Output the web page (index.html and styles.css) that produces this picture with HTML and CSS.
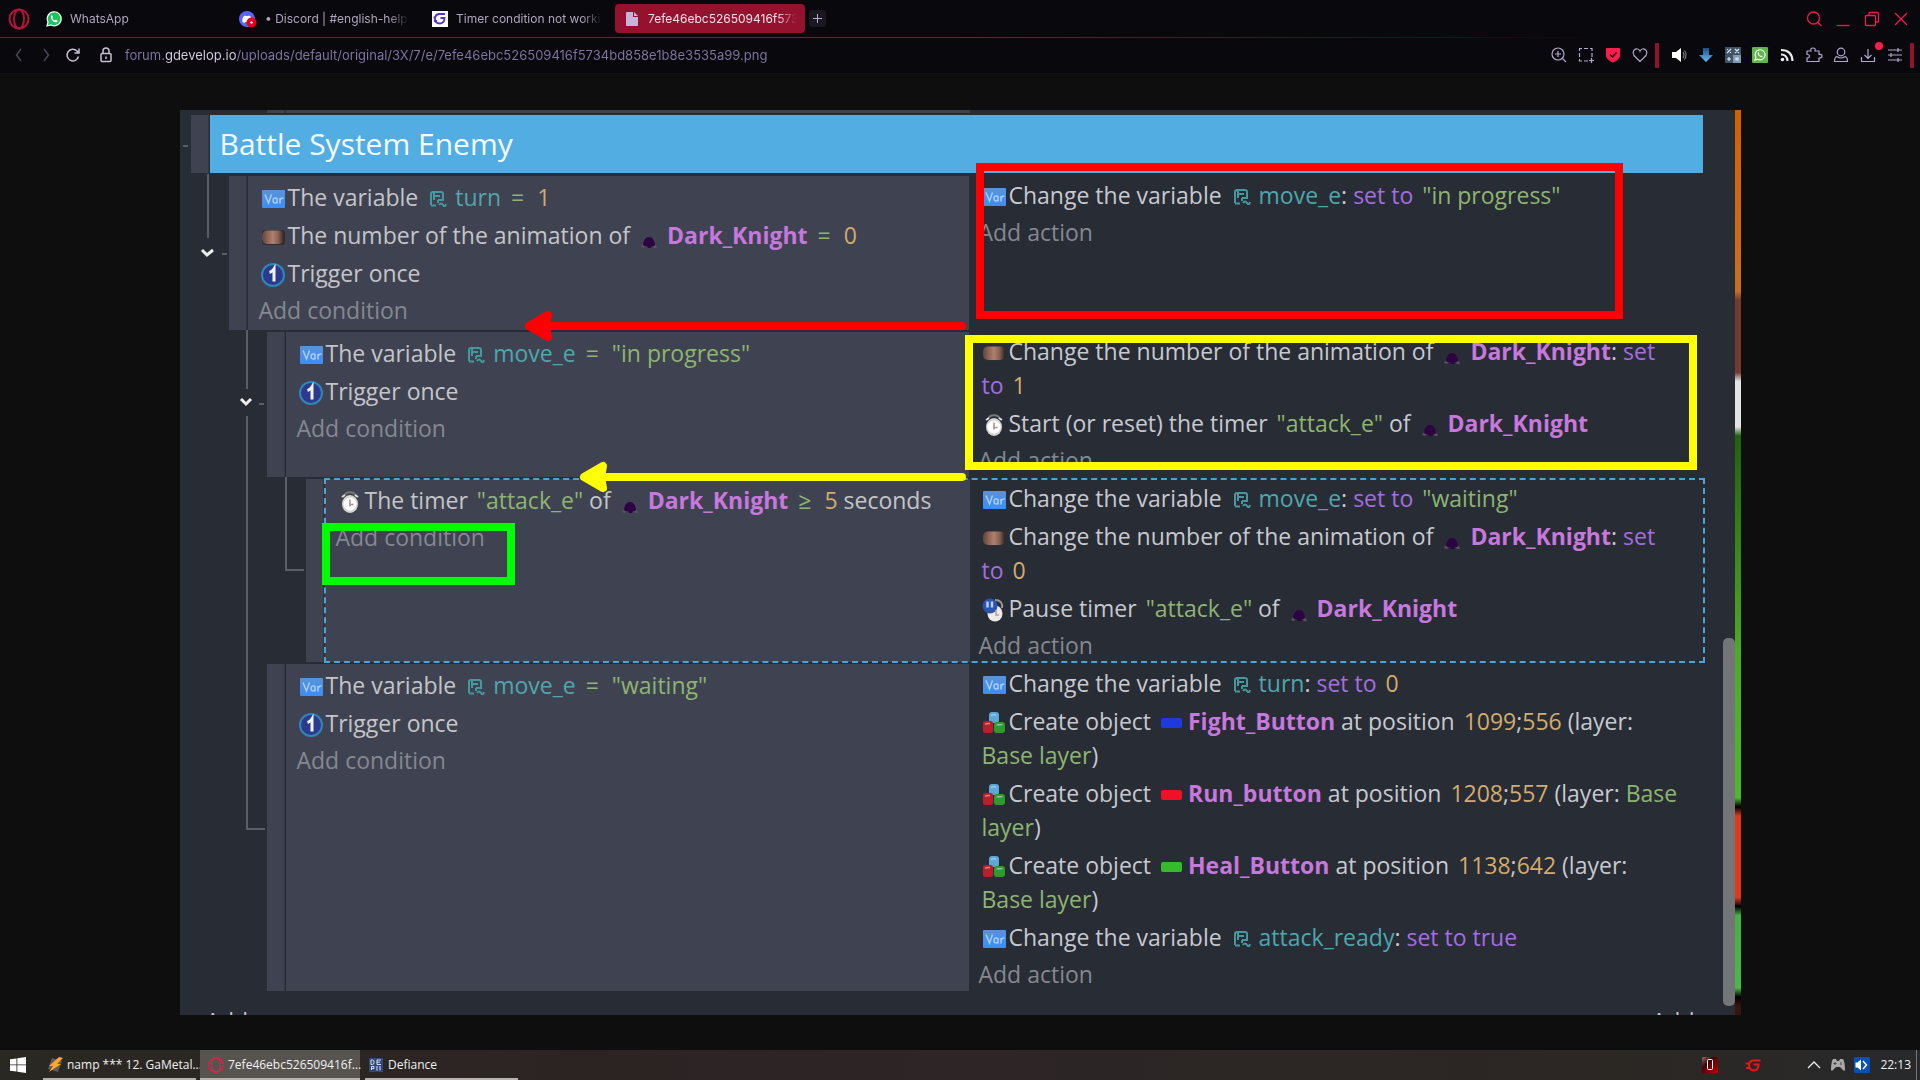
FILE: index.html
```html
<!DOCTYPE html>
<html lang="en">
<head>
<meta charset="utf-8">
<title>7efe46ebc526509416f5734bd858e1b8e3535a99.png</title>
<link rel="stylesheet" href="styles.css">
</head>
<body>
<svg class="defs" aria-hidden="true">
  <defs>
    <linearGradient id="g-var" x1="0" y1="0" x2="0" y2="1"><stop offset="0" stop-color="#5a93d4"/><stop offset="1" stop-color="#3b8dfb"/></linearGradient>
    <linearGradient id="g-hand"><stop offset="0" stop-color="#5a4640"/><stop offset=".25" stop-color="#8d6354"/><stop offset=".5" stop-color="#b08072"/><stop offset=".75" stop-color="#85604f"/><stop offset="1" stop-color="#2a2625"/></linearGradient>
    <linearGradient id="g-down" x1="0" y1="0" x2="0" y2="1"><stop offset="0" stop-color="#1d4f86"/><stop offset="1" stop-color="#5fc0ff"/></linearGradient>
    <linearGradient id="g-zero" x1="0" y1="0" x2="1" y2="1"><stop offset="0" stop-color="#8a7070"/><stop offset=".35" stop-color="#3a0508"/><stop offset="1" stop-color="#c00"/></linearGradient>
  </defs>
  <symbol id="i-var" viewBox="0 0 24 24"><rect x="1" y="3" width="23" height="18" rx="1" fill="url(#g-var)"/><path d="M4 7.500l3.500 8.500 3-8.500M16 11.500c-1-1-4-.8-4 2s3 3 4 1.500m0-4v5.500M19 16.500v-5.500m0 2c.8-1.800 2-2.200 3.500-2" fill="none" stroke="#a9cdf6" stroke-width="1.500"/></symbol>
  <symbol id="i-hand" viewBox="0 0 24 24"><rect x="1" y="5" width="23" height="15" rx="3" fill="#2e2e30"/><rect x="1" y="5.500" width="22" height="13.500" rx="5" fill="url(#g-hand)"/></symbol>
  <symbol id="i-once" viewBox="0 0 24 24"><circle cx="12" cy="12" r="11" fill="#2b3a8c" stroke="#2f86bd" stroke-width="2"/><path d="M8.500 9.500c2-.5 3.500-1.800 4.500-3.500v12.500" fill="none" stroke="#f2f2fa" stroke-width="3"/></symbol>
  <symbol id="i-clock" viewBox="0 0 24 24"><path d="M6 6c2-5 10-5 12 0" fill="none" stroke="#777" stroke-width="2"/><ellipse cx="12" cy="14" rx="8" ry="9" fill="#d8d5d0"/><circle cx="12" cy="14" r="6.500" fill="#fff"/><path d="M4 7l3-2M20 7l-3-2" stroke="#ddd" stroke-width="2"/><path d="M12 9.500v5h3.500M12 14.500v2" fill="none" stroke="#a58f8b" stroke-width="1.500"/></symbol>
  <symbol id="i-pause" viewBox="0 0 24 24"><path d="M13 2c6 0 8 4 7 8" fill="none" stroke="#999" stroke-width="2"/><ellipse cx="13" cy="15.500" rx="7.500" ry="8" fill="#eceae6"/><circle cx="8" cy="8" r="7.500" fill="#2b55ac"/><path d="M5.500 3.500v6M10 3.500v6" stroke="#b5cdf8" stroke-width="2.500"/><path d="M14 12v5h3" fill="none" stroke="#b99" stroke-width="1.500"/></symbol>
  <symbol id="i-create" viewBox="0 0 24 24"><rect x="7" y="1" width="10" height="11" rx="3" fill="#5fa6d8"/><rect x="1" y="10" width="10" height="12" rx="2" fill="#b8202c"/><rect x="12" y="11" width="11" height="11" rx="3" fill="#2f9a2f"/><path d="M9 4.500c1.500-1 4-1 5 0M3 13l5-.5M14.500 14l6-.5" stroke="#fff" stroke-width="1.500" opacity=".45" fill="none"/></symbol>
  <symbol id="i-root" viewBox="0 0 18 16"><path d="M2 14V3q0-2 2-2h8q2 0 2 2v6H9M5 1.500v7.500M5 5h6M2 14.500h5M9 9v3M10 14q2-3 4 0t3-1" fill="none" stroke="currentColor" stroke-width="2"/></symbol>
  <symbol id="i-knight" viewBox="0 0 18 13"><path d="M1 11q2-4 4-3l8 0q3 0 4 4l-3 0-2-2H6l-2 2z" fill="#59505f"/><path d="M3 9Q4 1 9 1t6 8q-2 2-3 1l-1 2H8l-1-2q-2 1-4-1z" fill="#2d0344"/></symbol>
  <symbol id="i-wa" viewBox="0 0 16 16"><path d="M1 15l1-4a7 7 0 1 1 3 3z" fill="#20c05c" stroke="#fff" stroke-width="1.200"/><path d="M5.300 4.500c.8-.7 1.300.5 1.600 1.300L6.300 7c.5 1.200 1.300 2 2.600 2.500l1-.8 1.800 1c-.2 1.800-1.900 1.800-3.200 1.300C6.300 10.200 4 7 5.300 4.500z" fill="#fff"/></symbol>
</svg>

<header class="browser">
  <div class="tabbar">
    <button class="opera" aria-label="Opera menu"><svg width="22" height="22" viewBox="0 0 22 22" fill="none" stroke="#b3143a" stroke-width="2"><ellipse cx="11" cy="11" rx="9.500" ry="9.500"/><ellipse cx="11" cy="11" rx="5" ry="9.500"/></svg></button>
    <nav class="tabs">
      <button class="tab"><svg width="16" height="16"><use href="#i-wa"/></svg><span>WhatsApp</span></button>
      <button class="tab"><svg width="18" height="16" viewBox="0 0 18 16"><circle cx="8" cy="8" r="8" fill="#5865f2"/><path d="M3.500 11C3 8 4 5.500 5 5l1.500-.6.4.6h2.300l.4-.6L11 5c1 .5 2 3 1.600 6l-2 1-.6-1H6.200l-.7 1z" fill="#fff"/><circle cx="12.500" cy="11.500" r="5" fill="#e8001c"/><circle cx="12.500" cy="11.500" r="1.200" fill="#fff"/></svg><span>• Discord | #english-help</span></button>
      <button class="tab"><svg width="16" height="16" viewBox="0 0 16 16"><rect width="16" height="16" fill="#fff"/><path d="M13 3H7Q3 3.500 3 8t5 4.500Q12.500 12 12.500 7H8.500M1.500 6.500h2M2 10h3" fill="none" stroke="#5a2fd0" stroke-width="1.800"/></svg><span>Timer condition not working</span></button>
      <button class="tab active"><svg width="12" height="14" viewBox="0 0 12 14"><path d="M1 0h6v5h5v8q0 1-1 1H1q-1 0-1-1V1q0-1 1-1zM8 0l4 4H8z" fill="#c9b3da"/></svg><span>7efe46ebc526509416f5734bd858e1b8</span></button>
      <button class="newtab" aria-label="New tab"><svg width="11" height="11" viewBox="0 0 11 11" stroke="#b9aed0" stroke-width="1"><path d="M5.500 1v9M1 5.500h9"/></svg></button>
    </nav>
    <div class="winctl">
      <button aria-label="Search tabs"><svg viewBox="0 0 16 16"><circle cx="7.500" cy="7" r="6"/><path d="M12 11.500l3.500 3.500"/></svg></button>
      <button aria-label="Minimize"><svg viewBox="0 0 16 16"><path d="M1.500 14.500h13"/></svg></button>
      <button aria-label="Restore"><svg viewBox="0 0 16 16"><rect x="1.500" y="4.500" width="10" height="10" rx="1"/><path d="M5 4.500V2.500q0-1 1-1h7.500q1 0 1 1V10q0 1-1 1h-2"/></svg></button>
      <button aria-label="Close"><svg viewBox="0 0 16 16"><path d="M2 2l12 12M14 2L2 14"/></svg></button>
    </div>
  </div>
  <div class="addressbar">
    <button class="nav dim" aria-label="Back"><svg viewBox="0 0 16 16"><path d="M10 2L5.500 8l4.500 6"/></svg></button>
    <button class="nav dim" aria-label="Forward"><svg viewBox="0 0 16 16"><path d="M6 2l4.500 6L6 14"/></svg></button>
    <button class="nav" aria-label="Reload"><svg viewBox="0 0 16 16"><path d="M13.500 9.500A5.800 5.800 0 1 1 12 4l1.500 1.500M14 1.500v4.500H9.500"/></svg></button>
    <button class="nav lock" aria-label="Site information"><svg viewBox="0 0 16 16"><rect x="3" y="6.500" width="10" height="8" rx="1"/><path d="M5 6.500V4a3 3 0 0 1 6 0v2.500M8 9.500v2.500"/></svg></button>
    <input class="url" type="text" aria-label="Address" value="forum.gdevelop.io/uploads/default/original/3X/7/e/7efe46ebc526509416f5734bd858e1b8e3535a99.png">
    <div class="tools">
      <button aria-label="Zoom"><svg viewBox="0 0 16 16"><circle cx="7" cy="7" r="6"/><path d="M11.500 11.500L15 15M7 4v6M4 7h6"/></svg></button>
      <button aria-label="Snapshot"><svg viewBox="0 0 16 16"><path d="M1.500 4V1.500H4M6 1.500h4M12 1.500h2v2.500M1.500 6v4M1.500 12v2H4M6 14h4M14 6v4M13.500 11v5M11 13.500h5"/></svg></button>
      <button aria-label="Ad blocker"><svg viewBox="0 0 16 16"><path d="M2 1.500h12q.5 0 .5.500v6q0 4-6.500 7-6.500-3-6.500-7V2q0-.5.5-.5z" fill="#fa1e4e" stroke="#fa1e4e"/><path d="M5 7.500l2.500 2.500L11.500 5.500" stroke="#2a0a14" stroke-width="1.500"/></svg></button>
      <button aria-label="Favourite"><svg viewBox="0 0 16 16"><path d="M8 14.500L2 8.500Q.5 6.500 1.500 4q1.500-2.500 4-2Q7.500 2.500 8 4q.5-1.500 2.500-2 2.500-.5 4 2 1 2.500-.5 4.500z"/></svg></button>
      <i class="bar"></i>
      <button aria-label="Volume"><svg viewBox="0 0 16 16"><path d="M1 5h4l5-4v14l-5-4H1z" fill="#fff" stroke="none"/><path d="M12 5q2 3 0 6M13.500 3.500q3 4.500 0 9" stroke="#777"/></svg></button>
      <button aria-label="Downloader"><svg viewBox="0 0 16 16"><path d="M5 1h6v7h4l-7 7-7-7h4z" fill="url(#g-down)" stroke="none"/></svg></button>
      <button aria-label="Calculator"><svg viewBox="0 0 16 16"><rect width="16" height="16" fill="#3f5468" stroke="none"/><rect x="8" y="8" width="8" height="8" fill="#7f9ab3" stroke="none"/><path d="M2 6l4-4M2.500 2v1M5.500 5v1M10 2l4 4M14 2l-4 4M2 12h4M4 10v4M11 11h2v2h-2z" stroke="#dfe8f0"/></svg></button>
      <button aria-label="WhatsApp"><svg viewBox="0 0 16 16"><rect width="16" height="16" rx="1" fill="#5cb848" stroke="none"/><path d="M3 13l.8-2.700a5 5 0 1 1 2 1.900z" stroke="#fff"/><path d="M6 5.500c.6-.5.900.3 1.200 1L7 7.500l1.700 1.500.8-.5 1.200.8c-.3 1-1.200 1-2.200.6C6.500 9 5 7 6 5.500z" fill="#fff" stroke="none"/></svg></button>
      <button aria-label="Feeds"><svg viewBox="0 0 16 16"><path d="M2 7.500q6 0 6.500 6.500M2 3q11 0 11.500 11" stroke="#eee" stroke-width="2.200"/><circle cx="3.500" cy="12.500" r="1.800" fill="#eee" stroke="none"/></svg></button>
      <button aria-label="Extensions"><svg viewBox="0 0 16 16"><path d="M1 4h4q-1-3 2-3t2 3h4v3.500q3-.5 3 1.500t-3 2v3.500H1V11q2.500 0 2.500-1.800T1 7.500z"/></svg></button>
      <button aria-label="Profile"><svg viewBox="0 0 16 16"><circle cx="8" cy="5" r="3.800"/><path d="M4 9.500Q1.500 10 1.500 14.500h13q0-4.500-2.500-5M4 9.500q4 3 8 0"/></svg></button>
      <button aria-label="Downloads" class="badge"><svg viewBox="0 0 16 16"><path d="M8 2v9M4.500 8L8 11.500 11.500 8M1.500 10v4.500h13V10"/></svg></button>
      <button aria-label="Easy setup"><svg viewBox="0 0 16 16"><path d="M1 3h14M1 8h14M1 13h14M11 1v4M4 6v4M11 11v4"/></svg></button>
      <i class="bar"></i>
    </div>
  </div>
</header>

<main class="viewer">
  <section class="shot">
    <div class="editor">
      <div class="event above lv2"><i class="handle"></i><div class="conditions"></div></div>
      <div class="group lv0"><i class="handle"></i><h1>Battle System Enemy</h1></div>

      <div class="event lv1">
        <i class="handle"></i>
        <div class="conditions">
          <p><svg class="ico"><use href="#i-var"/></svg>The variable <svg class="root"><use href="#i-root"/></svg><span class="var">turn</span> <span class="op">=</span> <span class="num">1</span></p>
          <p><svg class="ico"><use href="#i-hand"/></svg>The number of the animation of <svg class="knight"><use href="#i-knight"/></svg><b>Dark_Knight</b> <span class="op">=</span> <span class="num">0</span></p>
          <p><svg class="ico"><use href="#i-once"/></svg>Trigger once</p>
          <button class="add">Add condition</button>
        </div>
        <div class="actions">
          <p><svg class="ico"><use href="#i-var"/></svg>Change the variable <svg class="root"><use href="#i-root"/></svg><span class="var">move_e</span>: <span class="set">set to</span> <span class="str">"in progress"</span></p>
          <button class="add">Add action</button>
        </div>
      </div>

      <div class="event lv2">
        <i class="handle"></i>
        <div class="conditions">
          <p><svg class="ico"><use href="#i-var"/></svg>The variable <svg class="root"><use href="#i-root"/></svg><span class="var">move_e</span> <span class="op">=</span> <span class="str">"in progress"</span></p>
          <p><svg class="ico"><use href="#i-once"/></svg>Trigger once</p>
          <button class="add">Add condition</button>
        </div>
        <div class="actions">
          <p><svg class="ico"><use href="#i-hand"/></svg>Change the number of the animation of <svg class="knight"><use href="#i-knight"/></svg><b>Dark_Knight</b>: <span class="set">set<br>to</span> <span class="num">1</span></p>
          <p><svg class="ico"><use href="#i-clock"/></svg>Start (or reset) the timer <span class="str">"attack_e"</span> of <svg class="knight"><use href="#i-knight"/></svg><b>Dark_Knight</b></p>
          <button class="add">Add action</button>
        </div>
      </div>

      <div class="event lv3">
        <i class="handle"></i>
        <div class="selected">
          <div class="conditions">
            <p><svg class="ico"><use href="#i-clock"/></svg>The timer <span class="str">"attack_e"</span> of <svg class="knight"><use href="#i-knight"/></svg><b>Dark_Knight</b> <span class="op">≥</span> <span class="num">5</span> seconds</p>
            <button class="add">Add condition</button>
          </div>
          <div class="actions">
            <p><svg class="ico"><use href="#i-var"/></svg>Change the variable <svg class="root"><use href="#i-root"/></svg><span class="var">move_e</span>: <span class="set">set to</span> <span class="str">"waiting"</span></p>
            <p><svg class="ico"><use href="#i-hand"/></svg>Change the number of the animation of <svg class="knight"><use href="#i-knight"/></svg><b>Dark_Knight</b>: <span class="set">set<br>to</span> <span class="num">0</span></p>
            <p><svg class="ico"><use href="#i-pause"/></svg>Pause timer <span class="str">"attack_e"</span> of <svg class="knight"><use href="#i-knight"/></svg><b>Dark_Knight</b></p>
            <button class="add">Add action</button>
          </div>
        </div>
      </div>

      <div class="event lv2">
        <i class="handle"></i>
        <div class="conditions">
          <p><svg class="ico"><use href="#i-var"/></svg>The variable <svg class="root"><use href="#i-root"/></svg><span class="var">move_e</span> <span class="op">=</span> <span class="str">"waiting"</span></p>
          <p><svg class="ico"><use href="#i-once"/></svg>Trigger once</p>
          <button class="add">Add condition</button>
        </div>
        <div class="actions">
          <p><svg class="ico"><use href="#i-var"/></svg>Change the variable <svg class="root"><use href="#i-root"/></svg><span class="var">turn</span>: <span class="set">set to</span> <span class="num">0</span></p>
          <p><svg class="ico"><use href="#i-create"/></svg>Create object <i class="swatch blue"></i><b>Fight_Button</b> at position <span class="num">1099</span>;<span class="num2">556</span> (layer:<br><span class="str2">Base layer</span>)</p>
          <p><svg class="ico"><use href="#i-create"/></svg>Create object <i class="swatch red"></i><b>Run_button</b> at position <span class="num">1208</span>;<span class="num2">557</span> (layer: <span class="str2">Base<br>layer</span>)</p>
          <p><svg class="ico"><use href="#i-create"/></svg>Create object <i class="swatch green"></i><b>Heal_Button</b> at position <span class="num">1138</span>;<span class="num2">642</span> (layer:<br><span class="str2">Base layer</span>)</p>
          <p><svg class="ico"><use href="#i-var"/></svg>Change the variable <svg class="root"><use href="#i-root"/></svg><span class="var">attack_ready</span>: <span class="set">set to true</span></p>
          <button class="add">Add action</button>
        </div>
      </div>
      <div class="footer"><button>Add</button><button>Add</button></div>
    </div>
    <div class="scroll"><i></i></div>
    <div class="scene"></div>

    <svg class="marks" viewBox="0 0 1561 905" width="1561" height="905" fill="none">
      <g stroke="#5a5e67" stroke-width="2">
        <path d="M3 36h5M28 64v64M42 144h5M67 220v59M79 294h5M67 306v413h18M106 367v93h18"/>
      </g>
      <g stroke="#eee" stroke-width="3"><path d="M22 140l5 5 6-5M61 289l5 5 5-5"/></g>
      <rect x="800" y="57" width="639" height="148" stroke="#f00" stroke-width="8"/>
      <rect x="789" y="229" width="724" height="127" stroke="#ff0" stroke-width="8"/>
      <rect x="146" y="417" width="185" height="54" stroke="#0f0" stroke-width="8"/>
      <g stroke-linecap="round" stroke-width="8">
        <path d="M782 216H350" stroke="#f00"/>
        <path d="M782 367H405" stroke="#ff0"/>
      </g>
      <path d="M349 216l19-11-2 11 2 11z" fill="#f00" stroke="#f00" stroke-width="8" stroke-linejoin="round"/>
      <path d="M404 367l19-11-2 11 2 11z" fill="#ff0" stroke="#ff0" stroke-width="8" stroke-linejoin="round"/>
    </svg>
  </section>
</main>

<footer class="taskbar">
  <button class="start" aria-label="Start"><svg width="16" height="16" viewBox="0 0 16 16" fill="#fff"><path d="M0 2.300L6.500 1.400v6.100H0zM7.300 1.300L16 0v7.500H7.300zM0 8.300h6.500v6.300L0 13.700zM7.300 8.300H16V16l-8.700-1.300z"/></svg></button>
  <button class="task"><svg width="16" height="16" viewBox="0 0 16 16"><path d="M5 1l10 3-4 11L1 12z" fill="#5c5c5c"/><path d="M12 0L2 9h4l-4 6L14 7h-4l6-6z" fill="#ffa62b"/></svg>namp *** 12. GaMetal...</button>
  <button class="task current"><svg width="16" height="16" viewBox="0 0 16 16" fill="none" stroke="#f0204c" stroke-dasharray="2 1" stroke-width="1.300"><circle cx="8" cy="8" r="7.200"/><ellipse cx="8" cy="8" rx="4.500" ry="7"/></svg>7efe46ebc526509416f...</button>
  <button class="task"><svg width="14" height="14" viewBox="0 0 14 14"><rect width="14" height="14" fill="#31487c"/><path d="M2 2v4.500h1.500q1.500 0 1.500-2.300T3.500 2zM12 2H8v4.500h4M8 4.200h3M2.500 12V8.500h2.500v2h-2.500M8 8v4.500M11 8v4.500" fill="none" stroke="#d6e0f5"/></svg>Defiance</button>
  <div class="tray">
    <svg class="zero" width="16" height="16" viewBox="0 0 16 16"><rect width="16" height="16" rx="1" fill="url(#g-zero)"/><rect x="5.500" y="2.500" width="5" height="10" rx="1" fill="none" stroke="#fff"/></svg>
    <svg class="gdev" width="16" height="16" viewBox="0 0 16 16" fill="none" stroke="#e81414" stroke-width="2.200"><path d="M15.500 3.500H8Q4 4 4 8.500t5 5q4 0 4.500-6H8.500M.5 6.500h3M1 11h4"/></svg>
    <svg width="16" height="16" viewBox="0 0 16 16" fill="none" stroke="#eee" stroke-width="1.300"><path d="M2 11l6-6 6 6"/></svg>
    <svg class="pad" width="16" height="16" viewBox="0 0 16 16"><path d="M3 2h3l1 2h2l1-2h3q2 3 2 11-1 2-3-1l-2-2H6l-2 2q-2 3-3 1Q1 5 3 2z" fill="#a9a9a9"/><path d="M5 5v3M3.500 6.500h3M11 5v3" stroke="#444"/></svg>
    <svg width="16" height="16" viewBox="0 0 16 16"><rect width="16" height="16" rx="1" fill="#0a50b4"/><path d="M1.500 5.500h2l3.500-3v11l-3.500-3h-2z" fill="#fff"/><path d="M9 4l3.500 4L9 12" fill="none" stroke="#fff" stroke-width="1.500"/></svg>
    <time>22:13</time>
    <i class="peek"></i>
  </div>
</footer>
</body>
</html>
```
FILE: styles.css
```css
* { box-sizing: border-box; }
body { margin: 0; min-height: 100vh; display: flex; flex-direction: column; background: #0e0e0e; font-family: Inter, "Liberation Sans", sans-serif; }
button { margin: 0; padding: 0; border: 0; background: none; color: inherit; font: inherit; text-align: left; cursor: pointer; }
svg { flex: none; }
.defs { position: absolute; width: 0; height: 0; }

/* browser chrome */
.browser { background: #08080d; color: #b9aec6; font-size: 12px; border-bottom: 1px solid #14101a; }
.tabbar { display: flex; align-items: center; height: 37px; padding: 0 8px; }
.opera { display: flex; margin-right: 16px; }
.tabs { display: flex; align-items: center; flex: 1; }
.tab { display: flex; align-items: center; gap: 8px; width: 190px; height: 29px; margin-right: 3px; border-radius: 4px; color: #aea6bd; }
.tab span { flex: 1; overflow: hidden; white-space: nowrap; line-height: 20px; margin-right: 20px; mask-image: linear-gradient(to left, transparent, #000 20px); }
.tab.active { gap: 10px; margin: 0 4px 0 -10px; padding-left: 11px; background: #95122f; color: #efe0ea; }
.tab.active span { margin-right: 8px; }
.newtab { display: flex; align-items: center; justify-content: center; width: 17px; height: 17px; border-radius: 3px; background: #1b1822; }
.winctl { display: flex; gap: 13px; padding-right: 3px; }
.winctl button, .tools button, .nav { display: flex; }
.winctl svg { width: 16px; height: 16px; fill: none; stroke: #f01c4c; stroke-width: 1.300; }
.addressbar { display: flex; align-items: center; height: 36px; padding: 0 6px 0 11px; background: linear-gradient(to right, #8f122e 50%, transparent 84%) top / 100% 1px no-repeat; }
.nav { margin-right: 11px; }
.nav svg { width: 16px; height: 16px; fill: none; stroke: #c8bfd2; stroke-width: 1.500; }
.nav.dim svg { stroke: #4a4555; }
.nav.lock { margin: 0 11px 0 6px; }
.url { flex: 1; min-width: 0; padding: 0; border: 0; outline: 0; font: 13px/20px Inter, sans-serif; color: transparent; background: linear-gradient(to right, #8176a3 40px, #d8d0e4 40px, #d8d0e4 112px, #8176a3 112px); -webkit-background-clip: text; background-clip: text; }
.tools { display: flex; align-items: center; gap: 11px; }
.tools svg { width: 16px; height: 16px; fill: none; stroke: #b4a6cc; stroke-width: 1.200; overflow: visible; }
.tools .bar { width: 4px; height: 25px; margin: 0 1px 0 -4px; background: #95122f; border-radius: 1px; }
.tools .bar:last-child { margin: 0 0 0 -4px; }
.badge { position: relative; }
.badge::after { content: ""; position: absolute; right: -7px; top: -5px; width: 8px; height: 8px; border-radius: 50%; background: #fa1e4e; }

/* picture shown by the browser */
.viewer { flex: 1; display: flex; align-items: center; justify-content: center; }
.shot { position: relative; display: flex; width: 100%; max-width: 1561px; background: #282c34; font-family: "Open Sans", "Noto Sans", sans-serif; }
.editor { flex: 1; min-width: 0; display: flex; flex-direction: column; gap: 2px; }
.scroll { width: 12px; padding: 528px 0 9px; }
.scroll i { display: block; height: 100%; border-radius: 5px; background: #747578; }
.scene { width: 6px; background: linear-gradient(#d56000, #c87020 20%, #713c2e 21%, #713c2e 29%, #e4e4e4 30%, #e4e4e4 35%, #22600f 36%, #4cab25 60%, #4cb82c 76%, #000 77%, #dd3a1d 78%, #dd3a1d 87%, #000 88%, #45b045 89%, #48b848 97%, #000 98%, #381510 99%); }

.lv0 { margin-left: 11px; }
.lv1 { margin-left: 49px; }
.lv2 { margin-left: 87px; }
.lv3 { margin-left: 126px; }
.handle { width: 18px; flex: none; background: #3f4351; border-right: 1px solid #333742; }
.group { display: flex; gap: 1px; margin: 0 20px 1px 11px; }
.group h1 { flex: 1; margin: 0; padding-left: 10px; background: #52aee2; color: #f4fafd; font-size: 30px; font-weight: 400; line-height: 58px; }
.event { display: flex; gap: 1px; margin-right: 19px; }
.above .conditions { height: 3px; margin-right: 734px; padding: 0; }
.conditions { flex: 1; min-width: 0; padding: 2px 0 3px; background: #3f4351; color: #c4c5c8; }
.actions { flex: none; width: 734px; color: #c6c9cf; }
.event p { margin: 0; padding: 2px 0 2px 13px; font-size: 23px; font-weight: 500; line-height: 34px; white-space: nowrap; }
.event .actions p { padding-left: 12px; }
.add { display: block; padding: 1px 0 0 11px; font-size: 23px; font-weight: 500; line-height: 34px; color: #858890; }
.actions .add { padding-left: 9px; }
.selected { flex: 1; display: flex; outline: 2px dashed #4aa5d6; outline-offset: -1px; }
.ico { width: 24px; height: 24px; margin-right: 3px; vertical-align: -5px; }
.root { width: 18px; height: 16px; margin: 0 8px 0 5px; vertical-align: -1px; color: #46989f; }
.knight { width: 18px; height: 13px; margin: 0 9px 0 4px; vertical-align: -5px; }
.var { color: #4fa6ae; }
.op, .str, .str2 { color: #8db571; }
.op { margin: 0 4px; }
.num, .num2 { color: #d2ab6d; }
.num, .str { margin-left: 3px; }
.set { color: #a46de0; }
.event b { color: #c678dd; }
.swatch { display: inline-block; width: 21px; height: 10px; margin: 0 6px 0 4px; vertical-align: 2px; border-radius: 2px; }
.blue { background: #2039dc; }
.red { background: #f01028; }
.green { background: #35bc2c; }
.footer { display: flex; justify-content: space-between; height: 3px; margin: 19px 28px 0 26px; overflow: hidden; color: #c4c5c8; font-size: 23px; line-height: 18px; }
.marks { position: absolute; left: 0; top: 0; }

/* taskbar */
.taskbar { display: flex; height: 30px; background: linear-gradient(to right, #2a2822, #2c2423 30%, #2d2526 50%, #2b2723 85%, #28292b); color: #f0f0f0; font: 12px/28px "Open Sans", "Noto Sans", sans-serif; }
.start { display: flex; align-items: center; padding-left: 10px; width: 43px; }
.task { display: flex; align-items: center; gap: 4px; width: 153px; margin-right: 4px; padding: 1px 0 0 4px; border-bottom: 2px solid #b6b3af; white-space: nowrap; }
.task.current { width: 160px; padding-left: 8px; background: #575450; margin-right: 5px; }
.task:nth-child(4) svg { margin-right: 1px; }
.tray { display: flex; align-items: center; margin-left: auto; gap: 8px; }
.zero { margin-right: 19px; }
.gdev { margin-right: 37px; }
.tray time { margin: 0 5px 0 2px; }
.peek { width: 1px; height: 30px; margin-right: 3px; margin-left: -8px; background: #777; }
```
